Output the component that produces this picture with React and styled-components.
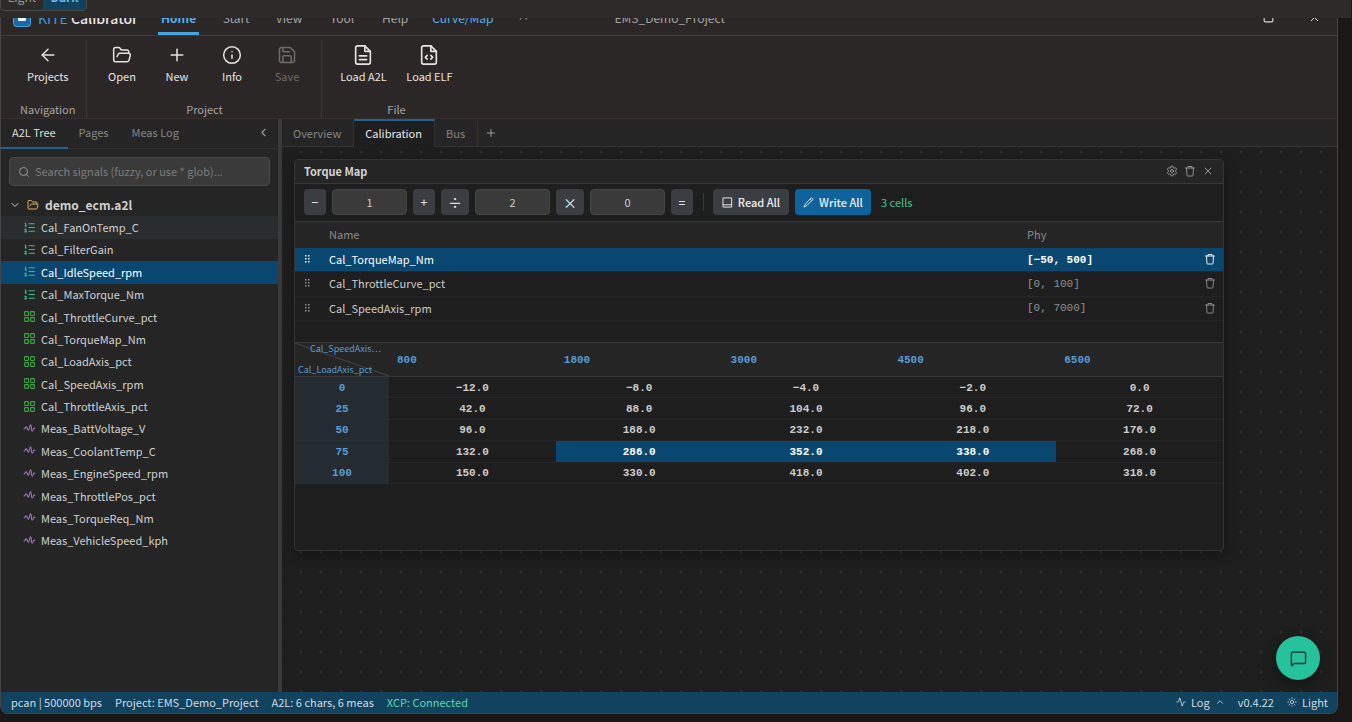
import React, { useState } from 'react'
import styled, { createGlobalStyle, css } from 'styled-components'
import {
  Activity, ArrowLeft, ChevronDown, ChevronLeft, ChevronUp, FolderOpen, Info,
  LayoutGrid, ListOrdered, MessageSquare, Plus, Save, Search, Settings, Sun, X
} from 'lucide-react'

const sans = `'Noto Sans CJK SC', 'Noto Sans', sans-serif`
const mono = `'Liberation Mono', 'DejaVu Sans Mono', monospace`

const signals = [
  { name: 'Cal_FanOnTemp_C', kind: 'value', hover: true },
  { name: 'Cal_FilterGain', kind: 'value' },
  { name: 'Cal_IdleSpeed_rpm', kind: 'value', selected: true },
  { name: 'Cal_MaxTorque_Nm', kind: 'value' },
  { name: 'Cal_ThrottleCurve_pct', kind: 'map' },
  { name: 'Cal_TorqueMap_Nm', kind: 'map' },
  { name: 'Cal_LoadAxis_pct', kind: 'map' },
  { name: 'Cal_SpeedAxis_rpm', kind: 'map' },
  { name: 'Cal_ThrottleAxis_pct', kind: 'map' },
  { name: 'Meas_BattVoltage_V', kind: 'meas' },
  { name: 'Meas_CoolantTemp_C', kind: 'meas' },
  { name: 'Meas_EngineSpeed_rpm', kind: 'meas' },
  { name: 'Meas_ThrottlePos_pct', kind: 'meas' },
  { name: 'Meas_TorqueReq_Nm', kind: 'meas' },
  { name: 'Meas_VehicleSpeed_kph', kind: 'meas' }
]

const maps = [
  { name: 'Cal_TorqueMap_Nm', phy: '[−50, 500]', selected: true },
  { name: 'Cal_ThrottleCurve_pct', phy: '[0, 100]' },
  { name: 'Cal_SpeedAxis_rpm', phy: '[0, 7000]' }
]

const speeds = [800, 1800, 3000, 4500, 6500]
const torque = [
  { load: 0, cells: ['−12.0', '−8.0', '−4.0', '−2.0', '0.0'] },
  { load: 25, cells: ['42.0', '88.0', '104.0', '96.0', '72.0'] },
  { load: 50, cells: ['96.0', '188.0', '232.0', '218.0', '176.0'] },
  { load: 75, cells: ['132.0', '286.0', '352.0', '338.0', '268.0'] },
  { load: 100, cells: ['150.0', '330.0', '418.0', '402.0', '318.0'] }
]

/* icons that lucide does not have in this shape */
const Svg = ({ size = 24, children, sw = 1.5 }) => (
  <svg width={size} height={size} viewBox="0 0 24 24" fill="none" stroke="currentColor"
    strokeWidth={sw} strokeLinecap="round" strokeLinejoin="round" aria-hidden="true">{children}</svg>
)
const FileLines = () => (
  <Svg size={22} sw={1.8}>
    <path d="M14 2H6a2 2 0 0 0-2 2v16a2 2 0 0 0 2 2h12a2 2 0 0 0 2-2V8z" />
    <path d="M14 2v6h6M8 13h8M8 17h8" />
  </Svg>
)
const FileCode = () => (
  <Svg size={22} sw={1.8}>
    <path d="M14 2H6a2 2 0 0 0-2 2v16a2 2 0 0 0 2 2h12a2 2 0 0 0 2-2V8z" />
    <path d="M14 2v6h6M10 12.500l-2 2 2 2M14 12.500l2 2-2 2" />
  </Svg>
)
const Trash = ({ size = 12 }) => (
  <Svg size={size} sw={1.8}>
    <path d="M3 6h18M8 6V3h8v3M5 6l1 15a1 1 0 0 0 1 1h10a1 1 0 0 0 1-1l1-15" />
  </Svg>
)
const Book = () => (
  <Svg size={11} sw={2}>
    <path d="M3 2h18v20H3zM3 17h18" />
  </Svg>
)
const Pen = () => (
  <Svg size={11} sw={2}>
    <path d="M19 2l3 3L8 19l-6 3 3-6zM16 5l3 3" />
  </Svg>
)
const Wave = () => (
  <Svg size={13} sw={2}>
    <path d="M2 13c2 0 2-4 4-4s2 6 4 6 2-10 4-10 1 12 3 12 2-6 3-6 1 1 2 1" />
  </Svg>
)
const Grip = () => (
  <svg width="8" height="10" viewBox="0 0 8 10" fill="currentColor" aria-hidden="true">
    {[1, 4, 7].map(y => <g key={y}><rect x="1" y={y} width="1.500" height="1.500" /><rect x="4" y={y} width="1.500" height="1.500" /></g>)}
  </svg>
)

const GlobalStyle = createGlobalStyle`
  * { box-sizing: border-box; }
  body { margin: 0; background: #1a1817; }
  button, input { font: inherit; color: inherit; }
  button { border: 0; padding: 0; background: none; cursor: pointer; }
`

const Page = styled.div`
  height: 100vh;
  padding: 0 14px 8px 0;
  display: flex;
  flex-direction: column;
  overflow: hidden;
  font: 11px/18px ${sans};
  color: #ccc;
`

const ThemeBar = styled.div`
  height: 18px;
  flex: none;
  margin-right: -13px;
  padding-bottom: 7px;
  display: flex;
  align-items: flex-end;
  overflow: hidden;
  background: #2d2b2a;
`

const ThemeSwitch = styled.div`
  display: flex;
  height: 28px;
  border: 1px solid #484848;
  border-radius: 4px;
  overflow: hidden;
  font-size: 12px;
`

const ThemeOption = styled.button`
  width: ${p => (p.$active ? '43px' : '42px')};
  line-height: 12px;
  background: ${p => (p.$active ? '#11435f' : 'transparent')};
  color: ${p => (p.$active ? '#6cb8ea' : '#999')};
  font-weight: ${p => (p.$active ? 700 : 400)};
`

const Window = styled.div`
  flex: 1;
  min-height: 0;
  display: flex;
  flex-direction: column;
  position: relative;
  border: solid #454545;
  border-width: 0 1px 1px;
  border-radius: 0 0 8px 8px;
  overflow: hidden;
  background: #1e1e1e;
`

const TitleClip = styled.div`
  height: 18px;
  flex: none;
  display: flex;
  align-items: flex-end;
  overflow: hidden;
  background: #2b2726;
  border-bottom: 1px solid #403d3c;
`

const TitleBar = styled.header`
  flex: 1;
  height: 36px;
  display: flex;
  align-items: center;
  padding: 1px 16px 0 12px;
  font-size: 12px;
`

const Logo = styled.svg`
  width: 18px;
  height: 18px;
  flex: none;
`

const Brand = styled.span`
  width: 119px;
  padding-left: 7px;
  font-size: 14px;
  font-weight: 500;
  color: #e8e8e8;
  white-space: nowrap;

  b { color: #3b9bdc; font-weight: 400; }
`

const Menu = styled.nav`
  display: flex;
  height: 35px;
  gap: 11px;
  margin-left: 8px;
`

const MenuItem = styled.a`
  padding: 9px 3px 0;
  min-width: ${p => (p.$wide ? '66px' : '38px')};
  border-bottom: 3px solid ${p => (p.$active ? '#4aa3df' : 'transparent')};
  text-align: center;
  text-decoration: none;
  color: ${p => (p.$active || p.$wide ? '#4fb0f0' : '#a5a3a2')};
  font-weight: ${p => (p.$active ? 700 : 400)};
  margin-right: ${p => (p.$active ? '7px' : '4px')};
`

const MoreButton = styled.button`
  display: flex;
  margin-left: 17px;
  color: #888;
`

const ProjectName = styled.span`
  margin-left: 84px;
  color: #a5a3a2;
`

const WindowButtons = styled.div`
  display: flex;
  gap: 33px;
  margin-left: auto;
  color: #ddd;
  button { display: flex; }
`

const Ribbon = styled.div`
  height: 83px;
  flex: none;
  display: flex;
  padding: 4px 0 0;
  background: #2b2726;
  border-bottom: 1px solid #352e2d;
`

const RibbonGroup = styled.div`
  display: flex;
  flex-direction: column;
  justify-content: space-between;
  align-items: center;
  padding: 0 ${p => p.$pad || '8px'};
  border-right: 1px solid ${p => (p.$last ? 'transparent' : '#3c3938')};
  color: #a5a3a2;
`

const RibbonItems = styled.div`
  display: flex;
`

const RibbonButton = styled.button`
  display: flex;
  flex-direction: column;
  align-items: center;
  gap: 1px;
  min-width: ${p => (p.$wide ? '66px' : '55px')};
  padding-top: 4px;
  color: #e6e4e3;
  &:disabled { color: #6e6b6a; }
`

const IconBox = styled.span`
  display: flex;
  align-items: center;
  justify-content: center;
  height: 22px;
`

const Workspace = styled.div`
  flex: 1;
  min-height: 0;
  display: flex;
`

const Sidebar = styled.aside`
  width: 281px;
  flex: none;
  background: #252526;
  border-right: 4px solid #3a3a3b;
`

const SideTabs = styled.div`
  display: flex;
  height: 30px;
  border-bottom: 1px solid #303031;
`

const SideTab = styled.button`
  padding: 0 12px 2px 11px;
  height: 30px;
  border-bottom: 2px solid ${p => (p.$active ? '#20628f' : 'transparent')};
  color: ${p => (p.$active ? '#ddd' : '#858585')};
`

const Collapse = styled.button`
  margin-left: auto;
  padding: 0 8px;
  color: #999;
`

const SearchBox = styled.label`
  display: flex;
  align-items: center;
  gap: 5px;
  height: 29px;
  margin: 8px;
  padding: 0 8px;
  border: 1px solid #4a4a4a;
  border-radius: 4px;
  background: #3a3a3b;
  color: #999;

  input {
    flex: 1;
    min-width: 0;
    border: 0;
    outline: 0;
    padding: 0 0 2px;
    background: none;
  }
  input::placeholder { color: #7c7c7c; opacity: 1; }
`

const Tree = styled.ul`
  display: flex;
  flex-direction: column;
  height: 358px;
  margin: 0;
  padding: 0;
  list-style: none;
`

const TreeRow = styled.li`
  flex: 1;
  display: flex;
  align-items: center;
  gap: ${p => (p.$root ? '6px' : '5px')};
  padding: 0 0 1px ${p => (p.$root ? '8px' : '22px')};
  font-size: ${p => (p.$root ? '12px' : '11px')};
  font-weight: ${p => (p.$root ? 700 : 400)};
  background: ${p => (p.$selected ? '#094771' : p.$hover ? '#2a2d2e' : 'transparent')};
  color: ${p => (p.$selected ? '#fff' : '#d0d0d0')};
  svg { color: ${p => p.$icon}; flex: none; }
`

const Main = styled.main`
  flex: 1;
  min-width: 0;
  display: flex;
  flex-direction: column;
`

const Tabs = styled.div`
  display: flex;
  height: 28px;
  flex: none;
  background: #252526;
  border-bottom: 1px solid #343435;
`

const Tab = styled.button`
  padding: 0 12px 3px 11px;
  height: 28px;
  border-top: 2px solid transparent;
  border-right: 1px solid ${p => (p.$plain ? 'transparent' : '#333')};
  color: #858585;
  ${p => p.$active && css`
    border-top-color: #20628f;
    background: #1e1e1e;
    color: #e8e8e8;
  `}
`

const AddTab = styled.button`
  padding: 0 7px;
  display: flex;
  align-items: center;
  color: #999;
`

const Canvas = styled.div`
  flex: 1;
  min-height: 0;
  padding: 12px 113px 0 12px;
  background: #1e1e1e radial-gradient(circle, #2d2d2d 1px, transparent 2px) 9px -5px / 20px 20px;
`

const Panel = styled.section`
  height: 392px;
  border: 1px solid #353535;
  border-radius: 4px;
  background: #1e1e1e;
  box-shadow: 0 4px 12px rgba(0, 0, 0, 0.35);
  overflow: hidden;
`

const PanelHeader = styled.div`
  display: flex;
  align-items: center;
  justify-content: space-between;
  height: 24px;
  padding: 0 9px 1px;
  background: #252526;
  border-bottom: 1px solid #383838;

  h2 { margin: 0; font-size: 11px; font-weight: 700; color: #d4d4d4; }
`

const PanelActions = styled.div`
  display: flex;
  gap: 6px;
  color: #999;
  button { display: flex; }
`

const Toolbar = styled.div`
  display: flex;
  align-items: center;
  gap: 6px;
  height: 38px;
  padding: 0 9px 1px;
  border-bottom: 1px solid #383838;
`

const OpButton = styled.button`
  width: ${p => (p.$wide ? '28px' : '22px')};
  height: 26px;
  border-radius: 4px;
  background: #3a3d41;
  color: #ddd;
  font-size: ${p => (p.$wide ? '14px' : '12px')};
  font-weight: 500;
  line-height: 24px;
`

const OpInput = styled.input`
  width: 75px;
  height: 26px;
  padding: 0;
  border: 1px solid #454545;
  border-radius: 4px;
  background: #3a3a3b;
  text-align: center;
`

const Divider = styled.span`
  width: 1px;
  height: 18px;
  margin: 0 3px 0 4px;
  background: #383838;
`

const ActionButton = styled.button`
  display: flex;
  align-items: center;
  justify-content: center;
  gap: 5px;
  width: 76px;
  height: 26px;
  border-radius: 4px;
  font-weight: 500;
  background: ${p => (p.$primary ? '#0e639c' : '#3a3d41')};
  color: #f0f0f0;
  white-space: nowrap;
`

const CellCount = styled.span`
  margin-left: 4px;
  color: #3fc79a;
`

const MapTable = styled.table`
  width: 100%;
  height: 99px;
  margin-bottom: 21px;
  table-layout: fixed;
  border-spacing: 0;

  th, td { padding: 0 0 1px; text-align: left; font-weight: 400; border-bottom: 1px solid #262626; }
  th { height: 26px; background: #252526; color: #8a8a8a; }
  td { height: 24px; }
`

const MapRow = styled.tr`
  background: ${p => (p.$selected ? '#094771' : 'transparent')};
  color: ${p => (p.$selected ? '#fff' : '#909090')};
  td:first-child { padding-left: 9px; }
  td:nth-child(2) { color: ${p => (p.$selected ? '#fff' : '#ccc')}; }
  td:nth-child(3) { font: ${p => (p.$selected ? 700 : 400)} 11px ${mono}; padding: 0; }
  button { display: flex; }
`

const Matrix = styled.table`
  width: 100%;
  height: 142px;
  table-layout: fixed;
  border-spacing: 0;
  font: 700 11px/16px ${mono};

  th, td { padding: 1px 0 0; height: 21px; border-bottom: 1px solid #262626; }
  thead th {
    height: 35px;
    padding: 0 0 0 8px;
    text-align: left;
    background: #252526;
    color: #569cd6;
    border-top: 1px solid #383838;
    border-bottom-color: #383838;
  }
  tbody th { background: #242c32; color: #569cd6; border-bottom-color: #262e34; }
`

const Corner = styled.th`
  && {
    padding: 0 8px 0 3px;
    font: 400 9px/12px ${sans};
    background: #252526 linear-gradient(to top right, transparent calc(50% - 1px), #454140 50%, transparent calc(50% + 1px));
  }
`

const AxisNames = styled.div`
  display: flex;
  flex-direction: column;
  justify-content: space-between;
  height: 33px;
  white-space: nowrap;
  span:first-child { align-self: flex-end; }
`

const Cell = styled.td`
  text-align: center;
  color: ${p => (p.$selected ? '#fff' : '#ccc')};
  background: ${p => (p.$selected ? '#094771' : 'transparent')};
`

const StatusBar = styled.footer`
  height: 21px;
  flex: none;
  display: flex;
  align-items: center;
  gap: 13px;
  padding: 0 9px 1px 10px;
  background: #11435f;
  color: #d0dae0;
`

const Connected = styled.span`
  color: #5cd6b0;
  margin-right: auto;
`

const StatusButton = styled.button`
  display: flex;
  align-items: center;
  gap: 5px;
`

const ChatButton = styled.button`
  position: absolute;
  right: 17px;
  bottom: 33px;
  width: 44px;
  height: 44px;
  display: flex;
  align-items: center;
  justify-content: center;
  border-radius: 50%;
  background: #26c29c;
  color: #17362e;
  box-shadow: 0 4px 14px rgba(0, 0, 0, 0.4);
`

const icons = {
  value: { icon: <ListOrdered size={13} strokeWidth={2} />, color: '#3fb98f' },
  map: { icon: <LayoutGrid size={13} strokeWidth={2} />, color: '#3fa648' },
  meas: { icon: <Wave />, color: '#a374c4' }
}

function Explorer() {
  const [query, setQuery] = useState('')
  return (
    <Sidebar>
      <SideTabs>
        <SideTab $active>A2L Tree</SideTab>
        <SideTab>Pages</SideTab>
        <SideTab>Meas Log</SideTab>
        <Collapse aria-label="Collapse"><ChevronLeft size={13} /></Collapse>
      </SideTabs>
      <SearchBox>
        <Search size={12} />
        <input aria-label="Search signals" value={query} onChange={e => setQuery(e.target.value)}
          placeholder="Search signals (fuzzy, or use * glob)..." />
      </SearchBox>
      <Tree>
        <TreeRow $root $icon="#d8ae6c">
          <ChevronDown size={12} color="#ccc" /><FolderOpen size={12} />demo_ecm.a2l
        </TreeRow>
        {signals.map(s => (
          <TreeRow key={s.name} $hover={s.hover} $selected={s.selected} $icon={icons[s.kind].color}>
            {icons[s.kind].icon}{s.name}
          </TreeRow>
        ))}
      </Tree>
    </Sidebar>
  )
}

function TorquePanel() {
  return (
    <Panel>
      <PanelHeader>
        <h2>Torque Map</h2>
        <PanelActions>
          <button aria-label="Settings"><Settings size={12} /></button>
          <button aria-label="Delete"><Trash /></button>
          <button aria-label="Close"><X size={12} /></button>
        </PanelActions>
      </PanelHeader>
      <Toolbar>
        <OpButton>−</OpButton>
        <OpInput aria-label="Step" defaultValue="1" />
        <OpButton>+</OpButton>
        <OpButton $wide>÷</OpButton>
        <OpInput aria-label="Factor" defaultValue="2" />
        <OpButton $wide>×</OpButton>
        <OpInput aria-label="Value" defaultValue="0" />
        <OpButton>=</OpButton>
        <Divider />
        <ActionButton><Book />Read All</ActionButton>
        <ActionButton $primary><Pen />Write All</ActionButton>
        <CellCount>3 cells</CellCount>
      </Toolbar>
      <MapTable>
        <colgroup><col width="34" /><col /><col width="177" /><col width="19" /></colgroup>
        <thead><tr><th /><th>Name</th><th>Phy</th><th /></tr></thead>
        <tbody>
          {maps.map(m => (
            <MapRow key={m.name} $selected={m.selected}>
              <td><Grip /></td>
              <td>{m.name}</td>
              <td>{m.phy}</td>
              <td><button aria-label={'Remove ' + m.name}><Trash /></button></td>
            </MapRow>
          ))}
        </tbody>
      </MapTable>
      <Matrix>
        <colgroup><col width="94" /></colgroup>
        <thead>
          <tr>
            <Corner><AxisNames><span>Cal_SpeedAxis⋯</span><span>Cal_LoadAxis_pct</span></AxisNames></Corner>
            {speeds.map(s => <th key={s}>{s}</th>)}
          </tr>
        </thead>
        <tbody>
          {torque.map(row => (
            <tr key={row.load}>
              <th>{row.load}</th>
              {row.cells.map((c, i) => <Cell key={i} $selected={row.load === 75 && i > 0 && i < 4}>{c}</Cell>)}
            </tr>
          ))}
        </tbody>
      </Matrix>
    </Panel>
  )
}

export default function App() {
  return (
    <Page>
      <GlobalStyle />
      <ThemeBar>
        <ThemeSwitch>
          <ThemeOption>Light</ThemeOption>
          <ThemeOption $active>Dark</ThemeOption>
        </ThemeSwitch>
      </ThemeBar>
      <Window>
        <TitleClip>
          <TitleBar>
            <Logo viewBox="0 0 18 18">
              <rect width="18" height="18" rx="4" fill="#4d9bd0" />
              <rect x="1" y="1" width="16" height="16" rx="3" fill="#1769a8" />
              <rect x="5" y="5" width="8" height="7" rx="1" fill="#fff" />
            </Logo>
            <Brand><b>KITE</b> Calibrator</Brand>
            <Menu>
              <MenuItem href="#home" $active>Home</MenuItem>
              <MenuItem href="#start">Start</MenuItem>
              <MenuItem href="#view">View</MenuItem>
              <MenuItem href="#tool">Tool</MenuItem>
              <MenuItem href="#help">Help</MenuItem>
              <MenuItem href="#map" $wide>Curve/Map</MenuItem>
            </Menu>
            <MoreButton aria-label="Collapse ribbon"><ChevronUp size={13} /></MoreButton>
            <ProjectName>EMS_Demo_Project</ProjectName>
            <WindowButtons>
              <button aria-label="Maximize"><Svg size={13} sw={2}><rect x="4" y="4" width="16" height="16" rx="2" /></Svg></button>
              <button aria-label="Close window"><X size={13} strokeWidth={1.8} /></button>
            </WindowButtons>
          </TitleBar>
        </TitleClip>
        <Ribbon>
          <RibbonGroup $pad="11px 0 19px">
            <RibbonItems>
              <RibbonButton><IconBox><ArrowLeft size={20} strokeWidth={1.7} /></IconBox>Projects</RibbonButton>
            </RibbonItems>
            <span>Navigation</span>
          </RibbonGroup>
          <RibbonGroup $pad="7px">
            <RibbonItems>
              <RibbonButton><IconBox><FolderOpen size={20} strokeWidth={1.8} /></IconBox>Open</RibbonButton>
              <RibbonButton><IconBox><Plus size={20} strokeWidth={1.8} /></IconBox>New</RibbonButton>
              <RibbonButton><IconBox><Info size={20} strokeWidth={1.8} /></IconBox>Info</RibbonButton>
              <RibbonButton disabled><IconBox><Save size={20} strokeWidth={1.8} /></IconBox>Save</RibbonButton>
            </RibbonItems>
            <span>Project</span>
          </RibbonGroup>
          <RibbonGroup $last>
            <RibbonItems>
              <RibbonButton $wide><IconBox><FileLines /></IconBox>Load A2L</RibbonButton>
              <RibbonButton $wide><IconBox><FileCode /></IconBox>Load ELF</RibbonButton>
            </RibbonItems>
            <span>File</span>
          </RibbonGroup>
        </Ribbon>
        <Workspace>
          <Explorer />
          <Main>
            <Tabs>
              <Tab>Overview</Tab>
              <Tab $active>Calibration</Tab>
              <Tab>Bus</Tab>
              <AddTab aria-label="Add tab"><Plus size={12} /></AddTab>
            </Tabs>
            <Canvas><TorquePanel /></Canvas>
          </Main>
        </Workspace>
        <StatusBar>
          <span>pcan | 500000 bps</span>
          <span>Project: EMS_Demo_Project</span>
          <span>A2L: 6 chars, 6 meas</span>
          <Connected>XCP: Connected</Connected>
          <StatusButton><Activity size={10} />Log<ChevronUp size={10} /></StatusButton>
          <span>v0.4.22</span>
          <StatusButton><Sun size={10} />Light</StatusButton>
        </StatusBar>
        <ChatButton aria-label="Open chat"><MessageSquare size={17} /></ChatButton>
      </Window>
    </Page>
  )
}
